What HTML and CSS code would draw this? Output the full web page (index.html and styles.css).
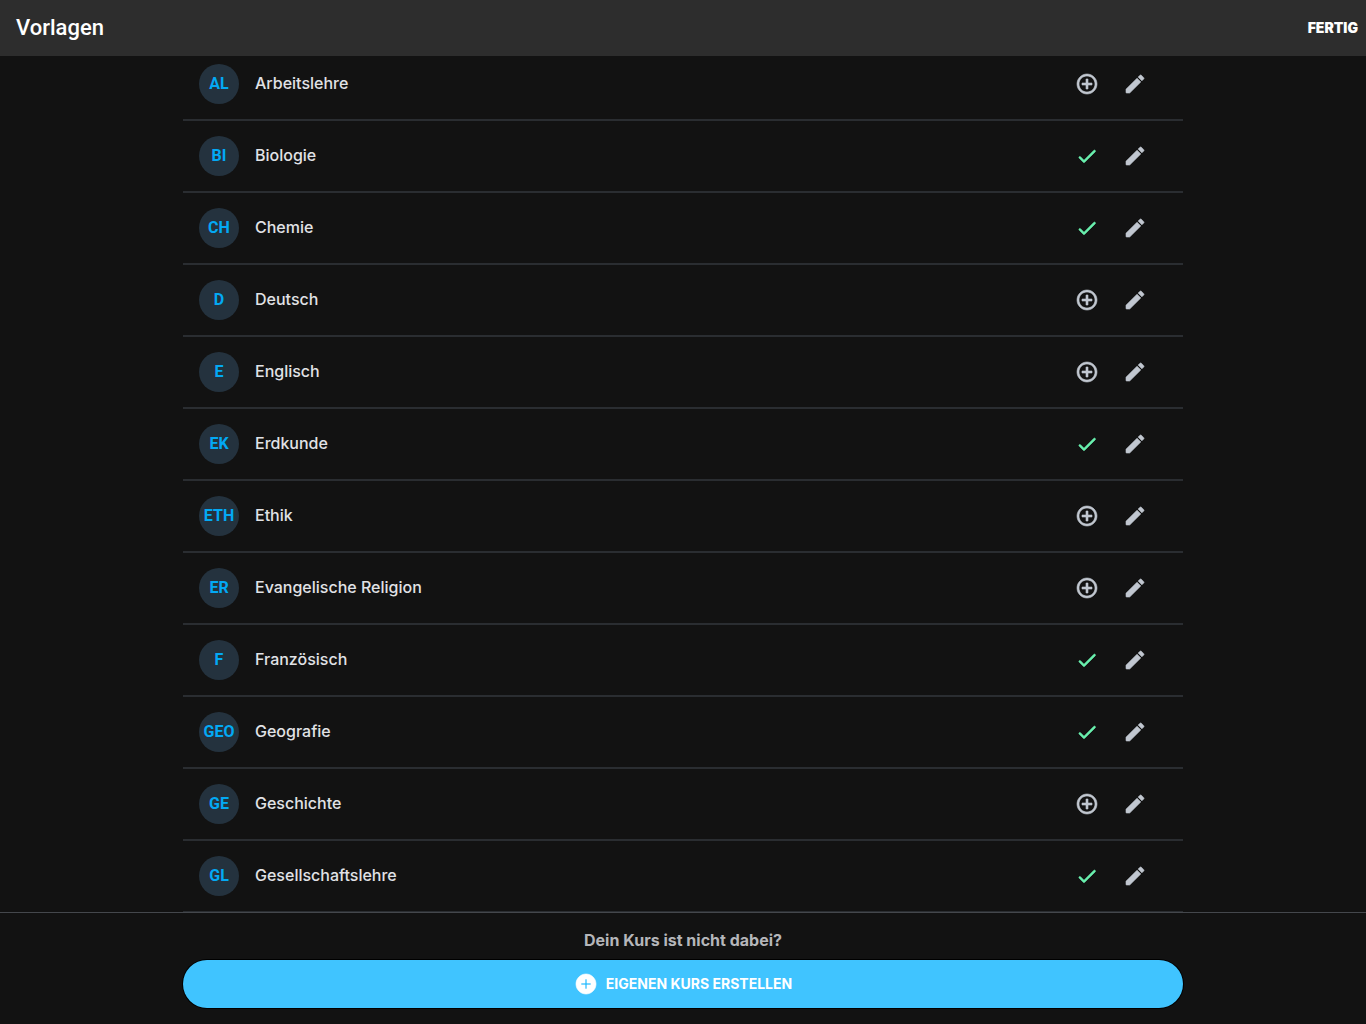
FILE: index.html
```html
<!DOCTYPE html>
<html lang="de">
<head>
<meta charset="utf-8">
<meta name="viewport" content="width=device-width, initial-scale=1">
<title>Vorlagen</title>
<link rel="stylesheet" href="styles.css">
</head>
<body>
<svg class="sprite" aria-hidden="true">
  <symbol id="add" viewBox="0 0 24 24"><path d="M13 7h-2v4H7v2h4v4h2v-4h4v-2h-4V7zm-1-5C6.480 2 2 6.480 2 12s4.480 10 10 10 10-4.480 10-10S17.520 2 12 2zm0 18c-4.410 0-8-3.590-8-8s3.590-8 8-8 8 3.590 8 8-3.590 8-8 8z"/></symbol>
  <symbol id="check" viewBox="0 0 24 24"><path d="M9 16.200L5.500 12.700a1 1 0 0 0-1.400 1.400l4.190 4.190a1 1 0 0 0 1.410 0L20.300 7.700a1 1 0 0 0-1.400-1.400L9 16.200z"/></symbol>
  <symbol id="edit" viewBox="0 0 24 24"><path d="M3 17.460v3.040c0 .280.220.500.500.500h3.040c.130 0 .260-.050.350-.150L17.810 9.940l-3.750-3.750L3.150 17.100c-.100.100-.150.220-.150.360zM20.710 7.040a1 1 0 0 0 0-1.410l-2.340-2.340a1 1 0 0 0-1.410 0l-1.830 1.830 3.750 3.750 1.830-1.830z"/></symbol>
  <symbol id="add-filled" viewBox="0 0 24 24"><path d="M12 2C6.480 2 2 6.480 2 12s4.480 10 10 10 10-4.480 10-10S17.520 2 12 2zm5 11h-4v4h-2v-4H7v-2h4V7h2v4h4v2z"/></symbol>
</svg>
<header class="topbar">
  <h1 class="title">Vorlagen</h1>
  <button class="done" type="button">FERTIG</button>
</header>
<main class="content">
  <ul class="courses" id="courses"></ul>
</main>
<footer class="footer">
  <p class="hint">Dein Kurs ist nicht dabei?</p>
  <button class="create" type="button"><svg class="icon"><use href="#add-filled"/></svg>EIGENEN KURS ERSTELLEN</button>
</footer>
<script src="script.js"></script>
</body>
</html>
```
FILE: styles.css
```css
* {
  box-sizing: border-box;
}

body {
  display: flex;
  flex-direction: column;
  height: 100vh;
  margin: 0;
  background: #121212;
  color: #e1e2e6;
  font-family: Roboto, "Liberation Sans", sans-serif;
  font-size: 16px;
  line-height: 24px;
}

button {
  border: 0;
  padding: 0;
  background: none;
  color: inherit;
  font: inherit;
  cursor: pointer;
}

.sprite {
  display: none;
}

.icon {
  display: block;
  width: 24px;
  height: 24px;
  fill: currentColor;
  stroke: currentColor;
  stroke-width: 0.6;
  stroke-linejoin: round;
}

.topbar {
  display: flex;
  flex: none;
  align-items: center;
  justify-content: space-between;
  height: 56px;
  padding: 0 8px 0 16px;
  background: #2d2d2d;
  color: #fff;
}

.title {
  margin: 0;
  font-size: 22px;
  font-weight: 500;
}

.done {
  font-family: Inter, sans-serif;
  font-size: 14px;
  font-weight: 900;
}

.content {
  flex: 1;
  min-height: 0;
  overflow: hidden;
}

.courses {
  max-width: 1000px;
  margin: -7px auto 0;
  padding: 0;
  list-style: none;
}

.course {
  display: flex;
  align-items: center;
  height: 72px;
  padding: 0 24px 0 16px;
  border-bottom: 2px solid #2a2d31;
}

.badge {
  display: grid;
  flex: none;
  place-items: center;
  width: 40px;
  height: 40px;
  margin-right: 16px;
  border-radius: 50%;
  background: #24323e;
  color: #03a9f4;
  font-weight: 700;
}

.name {
  flex: 1;
  padding-bottom: 2px;
  font-family: Inter, sans-serif;
  font-weight: 500;
}

.action {
  display: grid;
  place-items: center;
  width: 48px;
  height: 48px;
  color: #c1c7d0;
}

.action-added {
  color: #69f0ae;
}

.footer {
  flex: none;
  padding: 15px 16px 16px;
  border-top: 1px solid #44474c;
}

.hint {
  margin: 0 0 8px;
  color: #b5b6ba;
  font-family: Inter, sans-serif;
  font-weight: 700;
  text-align: center;
}

.create {
  display: flex;
  align-items: center;
  justify-content: center;
  gap: 8px;
  width: 100%;
  max-width: 1000px;
  height: 48px;
  margin: 0 auto;
  border-radius: 24px;
  background: #40c4ff;
  box-shadow: 0 0 0 1px #000;
  color: #fff;
  font-family: Inter, sans-serif;
  font-size: 14px;
  font-weight: 700;
}
```
FILE: script.js
```js
const courses = [
  ["AL", "Arbeitslehre", false],
  ["BI", "Biologie", true],
  ["CH", "Chemie", true],
  ["D", "Deutsch", false],
  ["E", "Englisch", false],
  ["EK", "Erdkunde", true],
  ["ETH", "Ethik", false],
  ["ER", "Evangelische Religion", false],
  ["F", "Französisch", true],
  ["GEO", "Geografie", true],
  ["GE", "Geschichte", false],
  ["GL", "Gesellschaftslehre", true]
];

document.getElementById("courses").innerHTML = courses.map(([code, name, added]) => `
  <li class="course">
    <span class="badge">${code}</span>
    <span class="name">${name}</span>
    <button class="action ${added ? "action-added" : ""}" type="button" aria-label="${name} ${added ? "entfernen" : "hinzufügen"}"><svg class="icon"><use href="#${added ? "check" : "add"}"/></svg></button>
    <button class="action" type="button" aria-label="${name} bearbeiten"><svg class="icon"><use href="#edit"/></svg></button>
  </li>`).join("");
```
